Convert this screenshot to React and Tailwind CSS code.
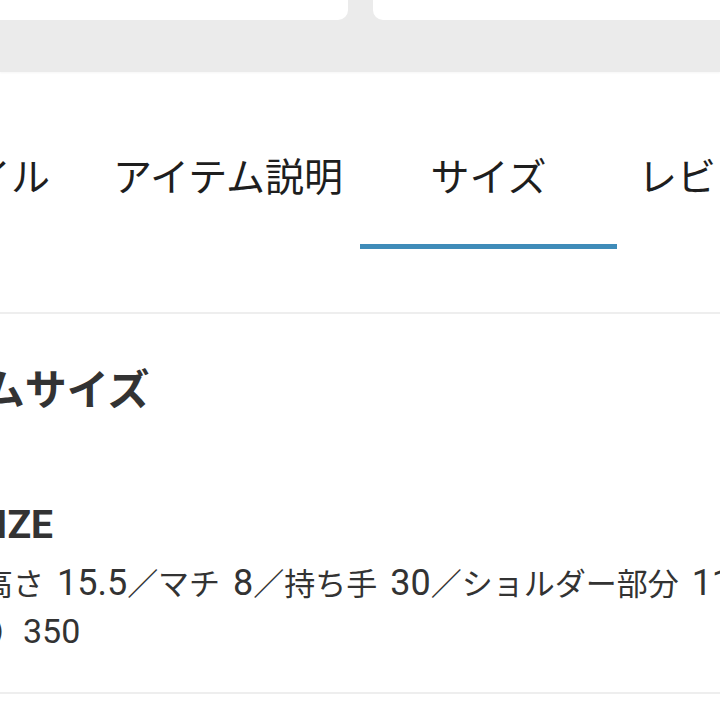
const tabs = [
  { label: 'スタイル', w: 'w-[248px]' },
  { label: 'アイテム説明', w: 'w-[264px]' },
  { label: 'サイズ', w: 'w-[257px]', active: true },
  { label: 'レビュー', w: 'w-[198px]' },
]

function Num({ children }) {
  return <span className="text-[36px] leading-none [word-spacing:4px]">{children}</span>
}

export default function App() {
  return (
    <div
      className="w-[720px] h-[720px] overflow-hidden bg-white text-[#222222]"
      style={{ fontFamily: 'Roboto, "Noto Sans CJK JP", sans-serif' }}
    >
      {/* gray band with card bottoms */}
      <div className="bg-[#ebebeb] h-[72px] flex gap-[25px] shadow-[0_1px_2px_rgba(0,0,0,0.04)]">
        <div className="w-[360px] ml-[-12px] h-[20px] bg-white rounded-b-[10px] shrink-0" />
        <div className="w-[400px] h-[20px] bg-white rounded-b-[10px] shrink-0" />
      </div>

      {/* tabs */}
      <div className="h-[242px] border-b-2 border-[#eeeeee]">
        <div className="flex ml-[-152px] whitespace-nowrap">
          {tabs.map((t) => (
            <div key={t.label} className={`${t.w} shrink-0 flex flex-col items-center pt-[87px]`}>
              <span className="text-[39px] leading-none text-[#1e1e1e]">{t.label}</span>
              <div className={`mt-[46px] h-[5px] w-full ${t.active ? 'bg-[#3f8cb9]' : 'bg-transparent'}`} />
            </div>
          ))}
        </div>
      </div>

      {/* size section */}
      <div className="h-[380px] border-b-2 border-[#eeeeee] whitespace-nowrap text-[#333333]">
        <div className="pt-[56px] ml-[-139px] text-[42px] leading-none font-bold">
          アイテムサイズ
        </div>
        <div className="mt-[94px] ml-[-28px] text-[39px] leading-none font-bold">
          SIZE
        </div>
        <div className="mt-[16px] text-[31px] leading-[48px]">
          <div className="ml-[-18px]">
            高さ<Num> 15.5</Num>／マチ<Num> 8</Num>／持ち手<Num> 30</Num>／ショルダー部分<Num> 110</Num>
          </div>
          <div className="ml-[-8px]">
            ）<span className="text-[34px] leading-none">350</span>
          </div>
        </div>
      </div>
    </div>
  )
}
